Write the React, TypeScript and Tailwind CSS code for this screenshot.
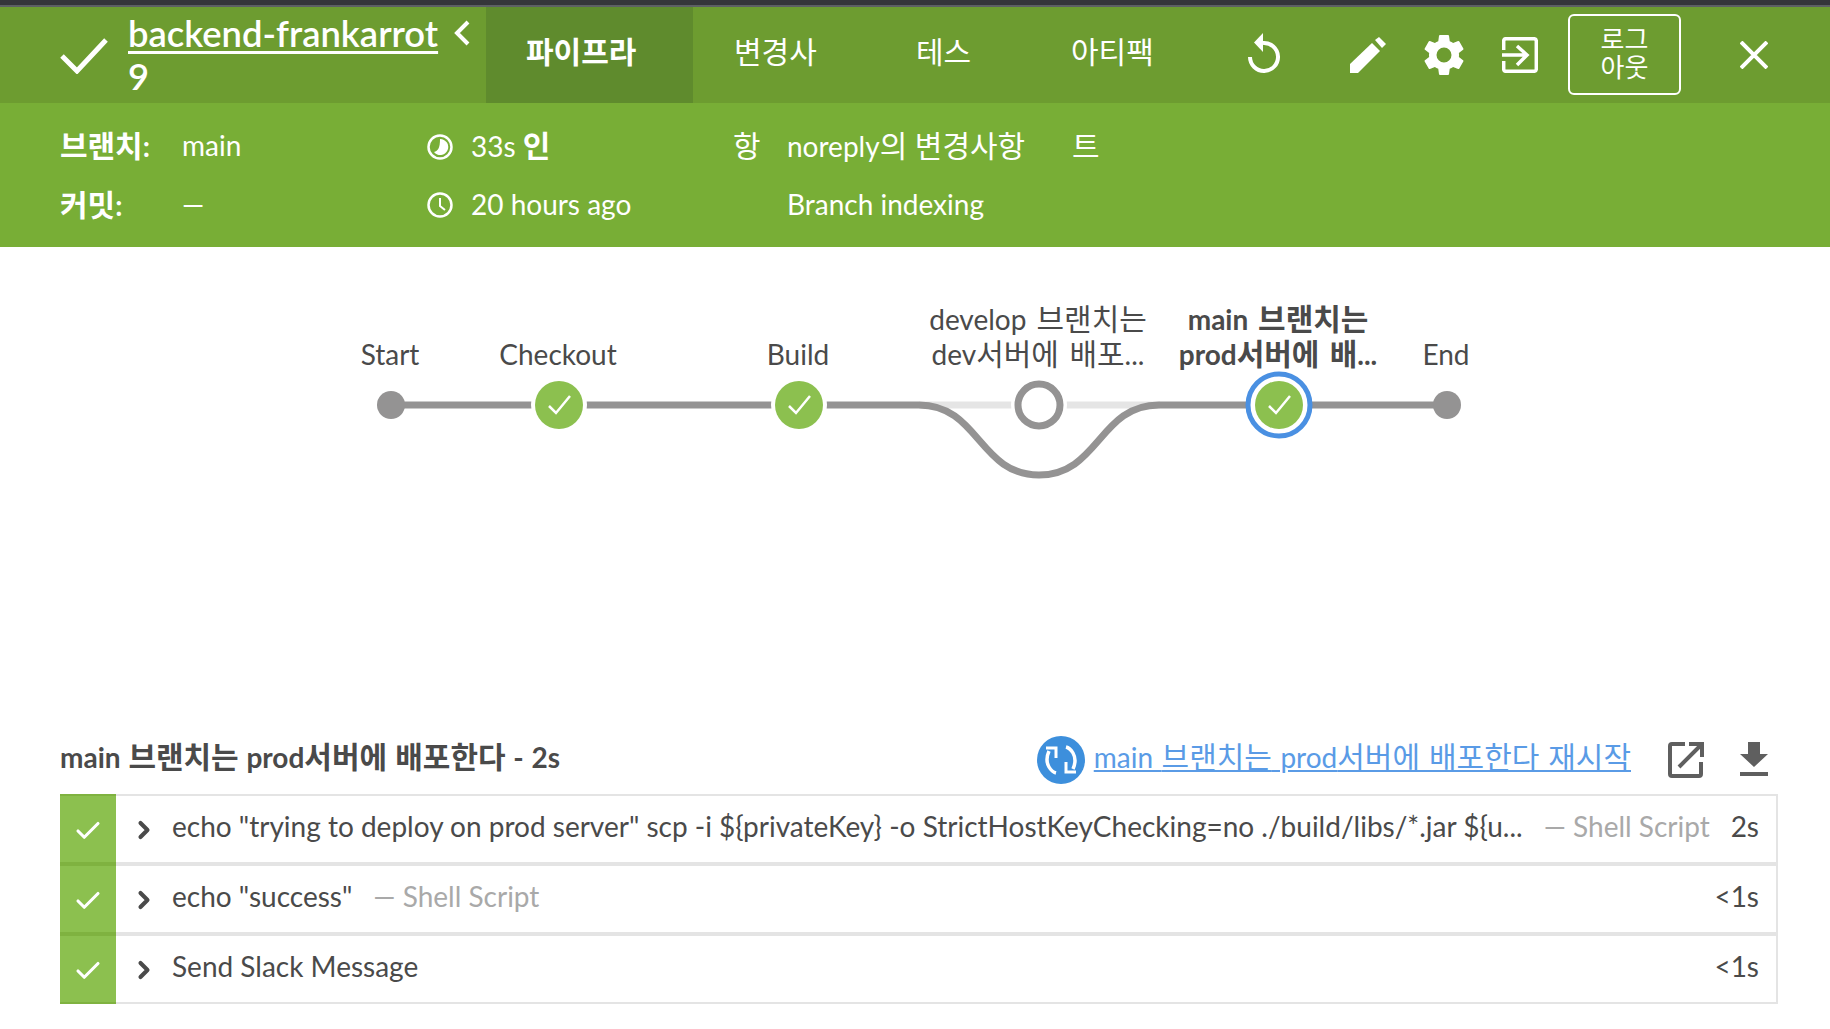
import { ChevronRight, Check } from 'lucide-react'

const LATIN = "font-['Lato','Noto_Sans_CJK_KR',sans-serif]"

// hangul is set a bit larger than the latin text around it
const Ko = ({ children }: { children: string }) => (
  <>
    {children.split(/([가-힣]+(?: [가-힣]+)*)/).map((part, i) =>
      i % 2 ? (
        <span key={i} className="text-[1.07em]">
          {part}
        </span>
      ) : (
        part
      ),
    )}
  </>
)

const CheckMark = ({ x, y }: { x: number; y: number }) => (
  <path d={`M${x - 10} ${y + 1}L${x - 3} ${y + 8}L${x + 11} ${y - 9}`} fill="none" stroke="#fff" strokeWidth="2.5" />
)

const SuccessNode = ({ x }: { x: number }) => (
  <g>
    <circle cx={x} cy="405" r="28" fill="#fff" />
    <circle cx={x} cy="405" r="24" fill="#8cc04f" />
    <CheckMark x={x} y={405} />
  </g>
)

// svg covers the whole graph area, so coordinates are the page's coordinates less the offset
function PipelineGraph() {
  return (
    <svg width="1830" height="260" viewBox="0 247 1830 260" className="block">
      <path d="M919 405H1160" stroke="#e5e5e5" strokeWidth="7" fill="none" />
      <path
        d="M391 405H919C979 405 979 475 1039 475C1099 475 1099 405 1159 405H1447"
        stroke="#949393"
        strokeWidth="7"
        fill="none"
      />
      <circle cx="391" cy="405" r="14" fill="#949393" />
      <SuccessNode x={559} />
      <SuccessNode x={799} />
      <circle cx="1039" cy="405" r="28" fill="#fff" />
      <circle cx="1039" cy="405" r="21" fill="#fff" stroke="#949393" strokeWidth="7" />
      <circle cx="1279" cy="405" r="31" fill="#fff" stroke="#4a90e2" strokeWidth="5" />
      <circle cx="1279" cy="405" r="24" fill="#8cc04f" />
      <CheckMark x={1279} y={405} />
      <circle cx="1447" cy="405" r="14" fill="#949393" />
    </svg>
  )
}

const labels = [
  { x: 390, text: ['Start'] },
  { x: 558, text: ['Checkout'] },
  { x: 798, text: ['Build'] },
  { x: 1038, text: ['develop 브랜치는', 'dev서버에 배포...'] },
  { x: 1278, text: ['main 브랜치는', 'prod서버에 배...'], bold: true },
  { x: 1446, text: ['End'] },
]

const steps = [
  {
    text: 'echo "trying to deploy on prod server" scp -i ${privateKey} -o StrictHostKeyChecking=no ./build/libs/*.jar ${u...',
    type: '— Shell Script',
    time: '2s',
  },
  { text: 'echo "success"', type: '— Shell Script', time: '<1s' },
  { text: 'Send Slack Message', type: '', time: '<1s' },
]

export default function App() {
  return (
    <div className={`w-[1830px] h-[1029px] bg-white overflow-hidden text-[#4a4a4a] ${LATIN}`}>
      <div className="h-[5px] bg-[#35363a]" />
      <div className="h-[2px] bg-[#5d6063]" />

      {/* top bar */}
      <div className="h-[96px] bg-[#6d9c30] text-white flex">
        <svg width="48" height="36" viewBox="0 0 48 36" className="ml-[60px] mt-[31px] shrink-0">
          <path d="M2 18L17 33L46 2" fill="none" stroke="#fff" strokeWidth="5" />
        </svg>
        <div className="w-[322px] ml-[20px] pt-[5px] text-[36.4px] leading-[43px] font-semibold">
          <a className="underline decoration-[3px] underline-offset-[4px]">backend-frankarrot</a>
          <div>9</div>
        </div>
        <svg width="16" height="26" viewBox="0 0 16 26" className="ml-[4px] mt-[13px] shrink-0">
          <path d="M14 2L3 13L14 24" fill="none" stroke="#fff" strokeWidth="4" />
        </svg>
        <div className="w-[207px] ml-[16px] bg-[#5f8b2d] pl-[40px] pt-[23px] text-[30px] leading-[42px] font-bold">
          파이프라
        </div>
        <div className="w-[88px] ml-[41px] pt-[23px] text-[30px] leading-[42px]">변경사</div>
        <div className="w-[60px] ml-[94px] pt-[23px] text-[30px] leading-[42px]">테스</div>
        <div className="w-[88px] ml-[95px] pt-[23px] text-[30px] leading-[42px]">아티팩</div>
        <svg width="32" height="40" viewBox="0 0 32 40" className="ml-[89px] mt-[26px] shrink-0">
          <path d="M15 10A14 14 0 1 1 2 24" fill="none" stroke="#fff" strokeWidth="4" />
          <path d="M15 0V19L6 9.5Z" fill="#fff" />
        </svg>
        <svg width="36" height="36" viewBox="0 0 36 36" fill="#fff" className="ml-[70px] mt-[30px] shrink-0">
          <path d="M0 27L22 6L30 14L8 36H0Z" />
          <path d="M25 3L29 0L36 7L32 11Z" />
        </svg>
        <svg width="50" height="50" viewBox="0 0 24 24" fill="#fff" className="ml-[33px] mt-[23px] shrink-0">
          <path d="M19.14 12.94c.04-.3.06-.61.06-.94s-.02-.64-.07-.94l2.03-1.58a.49.49 0 0 0 .12-.61l-1.92-3.32a.49.49 0 0 0-.59-.22l-2.39.96a7 7 0 0 0-1.62-.94l-.36-2.54a.48.48 0 0 0-.48-.41h-3.84a.48.48 0 0 0-.47.41l-.36 2.54a7.2 7.2 0 0 0-1.62.94l-2.39-.96a.49.49 0 0 0-.59.22L2.74 8.87a.48.48 0 0 0 .12.61l2.03 1.58c-.05.3-.09.63-.09.94s.02.64.07.94l-2.03 1.58a.49.49 0 0 0-.12.61l1.92 3.32c.12.22.37.29.59.22l2.39-.96c.5.38 1.03.7 1.62.94l.36 2.54c.05.24.24.41.48.41h3.84c.24 0 .44-.17.47-.41l.36-2.54c.59-.24 1.13-.56 1.62-.94l2.39.96c.22.08.47 0 .59-.22l1.92-3.32a.48.48 0 0 0-.12-.61l-2.01-1.58zM12 15.6A3.6 3.6 0 1 1 12 8.4a3.6 3.6 0 0 1 0 7.2z" />
        </svg>
        <svg width="36" height="36" viewBox="0 0 36 36" className="ml-[33px] mt-[30px] shrink-0" fill="none" stroke="#fff" strokeWidth="3.5">
          <path d="M1.7 13V4Q1.7 1.700 4 1.700H32Q34.300 1.700 34.300 4V32Q34.300 34.300 32 34.300H4Q1.700 34.300 1.700 32V24" />
          <path d="M0 18H25M15 9L25 18L15 28" />
        </svg>
        <button className="w-[113px] h-[81px] ml-[30px] mt-[7px] pb-[4px] border-2 border-white rounded-[6px] text-[26px] leading-[28px] shrink-0">
          로그
          <br />
          아웃
        </button>
        <svg width="28" height="28" viewBox="0 0 28 28" className="ml-[59px] mt-[34px] shrink-0" fill="none" stroke="#fff" strokeWidth="4">
          <path d="M1 1L27 27M27 1L1 27" />
        </svg>
      </div>

      {/* run details */}
      <div className="h-[144px] bg-[#78ae36] text-white text-[28px] leading-[42px] pt-[21px]">
        <div className="flex h-[59px]">
          <div className="w-[122px] ml-[60px] font-bold">
            <Ko>브랜치</Ko>:
          </div>
          <div className="w-[245px]">main</div>
          <svg width="26" height="26" viewBox="0 0 26 26" className="mt-[10px] shrink-0">
            <circle cx="13" cy="13" r="11.5" fill="none" stroke="#fff" strokeWidth="2.5" />
            <path d="M13 5A8 8 0 1 1 7 18C11 17 13 14 13 5Z" fill="#fff" />
          </svg>
          <div className="w-[262px] ml-[18px]">
            33s{' '}
            <span className="font-bold">
              <Ko>인</Ko>
            </span>
          </div>
          <div className="w-[54px]">
            <Ko>항</Ko>
          </div>
          <div className="w-[285px]">
            <Ko>noreply의 변경사항</Ko>
          </div>
          <div>
            <Ko>트</Ko>
          </div>
        </div>
        <div className="flex">
          <div className="w-[122px] ml-[60px] font-bold">
            <Ko>커밋</Ko>:
          </div>
          <div className="w-[245px]">—</div>
          <svg width="26" height="26" viewBox="0 0 26 26" className="mt-[9px] shrink-0" fill="none" stroke="#fff">
            <circle cx="13" cy="13" r="11.5" strokeWidth="2.5" />
            <path d="M13 6V14L18 18" strokeWidth="2" />
          </svg>
          <div className="w-[316px] ml-[18px]">20 hours ago</div>
          <div>Branch indexing</div>
        </div>
      </div>

      {/* pipeline graph */}
      <div className="relative h-[484px]">
        <PipelineGraph />
        {labels.map((l) => (
          <div
            key={l.x}
            className={`absolute bottom-[360px] -translate-x-1/2 text-center text-[28px] leading-[34px] whitespace-nowrap [word-spacing:3px] ${l.bold ? 'font-bold' : ''}`}
            style={{ left: l.x }}
          >
            {l.text.map((t) => (
              <div key={t}>
                <Ko>{t}</Ko>
              </div>
            ))}
          </div>
        ))}
      </div>

      {/* step header */}
      <div className="h-[63px] flex items-start pl-[60px] pr-[62px]">
        <div className="text-[28px] leading-[50px] font-bold flex-1 [word-spacing:1px]">
          <Ko>main 브랜치는 prod서버에 배포한다 - 2s</Ko>
        </div>
        <svg width="48" height="48" viewBox="0 0 48 48" className="mt-[5px] shrink-0" fill="none" stroke="#fff" strokeWidth="3.5">
          <circle cx="24" cy="24" r="24" fill="#3d8fdc" stroke="none" />
          <path d="M12 15Q8 24 12 31Q15 36 19 37" />
          <path d="M9 12H19V22" strokeWidth="3" />
          <path d="M36 33Q40 24 36 17Q33 12 29 11" />
          <path d="M39 36H29V26" strokeWidth="3" />
        </svg>
        <a className="ml-[9px] text-[28px] leading-[50px] text-[#5a9be6] underline underline-offset-2 shrink-0 [word-spacing:1.4px]">
          <Ko>main 브랜치는 prod서버에 배포한다 재시작</Ko>
        </a>
        <svg width="36" height="36" viewBox="0 0 36 36" className="ml-[37px] mt-[11px] shrink-0" fill="none" stroke="#5f5f5f" strokeWidth="4">
          <path d="M17 2H4Q2 2 2 4V32Q2 34 4 34H31Q33 34 33 32V20" />
          <path d="M11 25L33 3M21 2H34V15" />
        </svg>
        <svg width="28" height="34" viewBox="0 0 28 34" className="ml-[36px] mt-[11px] shrink-0" fill="#5f5f5f">
          <path d="M8 0H20V12H28L14 25L0 12H8Z" />
          <path d="M0 30H28V34H0Z" />
        </svg>
      </div>

      {/* steps */}
      <div className="ml-[60px] w-[1718px]">
        {steps.map((s) => (
          <div key={s.text} className="flex h-[70px] border-2 border-l-0 border-[#e4e4e4]">
            <div className="w-[56px] -my-[2px] bg-[#8cc04f] border-y-2 border-[#7fb240] flex items-center justify-center shrink-0">
              <Check size={30} strokeWidth={2.5} className="text-white mt-[4px]" />
            </div>
            <ChevronRight size={28} strokeWidth={3.5} className="ml-[14px] mt-[20px] shrink-0 text-[#4a4a4a]" />
            <div className="ml-[14px] text-[28px] leading-[60px] whitespace-nowrap">{s.text}</div>
            {s.type && <div className="ml-[21px] text-[28px] leading-[60px] text-[#a9a9a9] whitespace-nowrap">{s.type}</div>}
            <div className="ml-auto pr-[17px] text-[28px] leading-[60px]">{s.time}</div>
          </div>
        ))}
      </div>
    </div>
  )
}
